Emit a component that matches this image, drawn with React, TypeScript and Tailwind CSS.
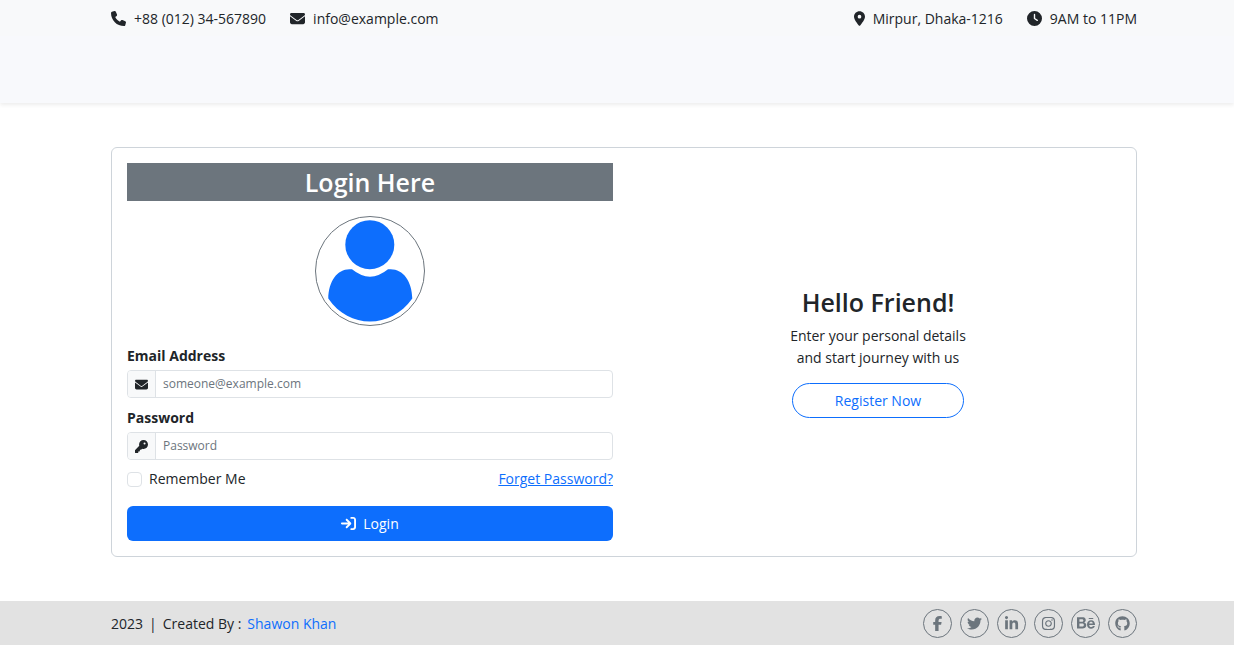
import React from "react";
import {
  FaArrowRightToBracket,
  FaBehance,
  FaClock,
  FaEnvelope,
  FaFacebookF,
  FaGithub,
  FaInstagram,
  FaKey,
  FaLinkedinIn,
  FaLocationDot,
  FaPhone,
  FaTwitter,
} from "react-icons/fa6";

const socials = [
  { name: "Facebook", Icon: FaFacebookF, size: "size-[15px]" },
  { name: "Twitter", Icon: FaTwitter, size: "size-[15px]" },
  { name: "LinkedIn", Icon: FaLinkedinIn, size: "size-[15px]" },
  { name: "Instagram", Icon: FaInstagram, size: "size-[15px]" },
  { name: "Behance", Icon: FaBehance, size: "size-[18px]" },
  { name: "GitHub", Icon: FaGithub, size: "size-[15px]" },
];

function InfoItem({ icon, children }: { icon: React.ReactNode; children: React.ReactNode }) {
  return (
    <li className="flex items-center gap-2">
      {icon}
      <span>{children}</span>
    </li>
  );
}

function Header() {
  return (
    <header className="bg-[#f8f9fc] pb-[67px] shadow-[0_2px_4px_rgba(0,0,0,0.075)]">
      <div className="flex h-[36px] items-center justify-between bg-[#f8f9fa] pl-[111px] pr-[97px]">
        <ul className="flex items-center gap-6">
          <InfoItem icon={<FaPhone className="size-[15px]" />}>+88 (012) 34-567890</InfoItem>
          <InfoItem icon={<FaEnvelope className="size-[15px]" />}>info@example.com</InfoItem>
        </ul>
        <ul className="flex items-center gap-6">
          <InfoItem icon={<FaLocationDot className="h-[15px] w-[11px]" />}>Mirpur, Dhaka-1216</InfoItem>
          <InfoItem icon={<FaClock className="size-[15px]" />}>9AM to 11PM</InfoItem>
        </ul>
      </div>
    </header>
  );
}

function Avatar() {
  return (
    <svg viewBox="0 0 110 110" className="mx-auto mt-[15px] size-[110px]" aria-hidden="true">
      <circle cx="55" cy="55" r="54.5" fill="#fff" stroke="#6c757d" />
      <circle cx="54.8" cy="28.7" r="24.5" fill="#0d6efd" />
      <path
        d="M37 53.3Q55 68 73 53.3C87 51.500 97 64 97.300 82.500C86 98 71 105.500 55 105.500C39 105.500 24 98 13.300 82.500C13.500 64 23.500 51.500 37 53.300Z"
        fill="#0d6efd"
      />
    </svg>
  );
}

function Field({
  id,
  label,
  type,
  placeholder,
  icon,
}: {
  id: string;
  label: string;
  type: string;
  placeholder: string;
  icon: React.ReactNode;
}) {
  return (
    <div>
      <label htmlFor={id} className="mb-[3px] block font-bold leading-[22px]">
        {label}
      </label>
      <div className="flex h-[28px] overflow-hidden rounded border border-[#dee2e6]">
        <span className="flex w-[28px] shrink-0 items-center justify-center border-r border-[#dee2e6] bg-[#f8f9fa]">
          {icon}
        </span>
        <input
          id={id}
          type={type}
          placeholder={placeholder}
          className="min-w-0 flex-1 px-[7px] text-[12px] outline-none placeholder:text-[#6c757d]"
        />
      </div>
    </div>
  );
}

function LoginForm() {
  return (
    <form onSubmit={(e) => e.preventDefault()}>
      <h2 className="bg-[#6c757d] text-center text-[25px] font-semibold leading-[38px] text-white">Login Here</h2>
      <Avatar />
      <div className="mt-[19px] flex flex-col gap-[9px]">
        <Field
          id="email"
          label="Email Address"
          type="email"
          placeholder="someone@example.com"
          icon={<FaEnvelope className="size-[13px]" />}
        />
        <Field
          id="password"
          label="Password"
          type="password"
          placeholder="Password"
          icon={<FaKey className="size-[13px]" />}
        />
      </div>
      <div className="mt-[8px] flex items-center justify-between leading-[22px]">
        <label className="flex items-center gap-[7px]">
          <input
            type="checkbox"
            className="size-[15px] appearance-none rounded-[4px] border border-[#dee2e6] bg-white checked:bg-[#0d6efd]"
          />
          Remember Me
        </label>
        <a href="#forgot" className="text-[#0d6efd] underline">
          Forget Password?
        </a>
      </div>
      <button
        type="submit"
        className="mt-[16px] flex h-[35px] w-full items-center justify-center gap-[7px] rounded-md bg-[#0d6efd] text-white"
      >
        <FaArrowRightToBracket className="size-[15px]" />
        Login
      </button>
    </form>
  );
}

function Welcome() {
  return (
    <section className="flex flex-col items-center justify-center text-center">
      <h2 className="mb-[7px] text-[25px] font-semibold leading-[32px]">Hello Friend!</h2>
      <p className="leading-[22px]">
        Enter your personal details
        <br />
        and start journey with us
      </p>
      <a
        href="#register"
        className="mt-[14px] flex h-[35px] w-[172px] items-center justify-center rounded-full border border-[#0d6efd] text-[#0d6efd]"
      >
        Register Now
      </a>
    </section>
  );
}

function Footer() {
  return (
    <footer className="flex h-[44px] items-center justify-between bg-[#e2e2e2] pl-[111px] pr-[97px]">
      <p className="flex items-center gap-[6px]">
        <span>2023</span>
        <span>|</span>
        <span>Created By :</span>
        <a href="#author" className="text-[#0d6efd]">
          Shawon Khan
        </a>
      </p>
      <ul className="flex gap-2">
        {socials.map(({ name, Icon, size }) => (
          <li key={name}>
            <a
              href={"#" + name.toLowerCase()}
              aria-label={name}
              className="flex size-[29px] items-center justify-center rounded-full border border-[#6c757d] text-[#6c757d]"
            >
              <Icon className={size} />
            </a>
          </li>
        ))}
      </ul>
    </footer>
  );
}

export default function App() {
  return (
    <div className="bg-white font-['Open_Sans',sans-serif] text-[14px] text-[#212529]">
      <Header />
      <main className="py-[44px] pl-[111px] pr-[97px]">
        <div className="grid grid-cols-2 gap-[22px] rounded-md border border-[#ced4da] p-[15px]">
          <LoginForm />
          <Welcome />
        </div>
      </main>
      <Footer />
    </div>
  );
}
